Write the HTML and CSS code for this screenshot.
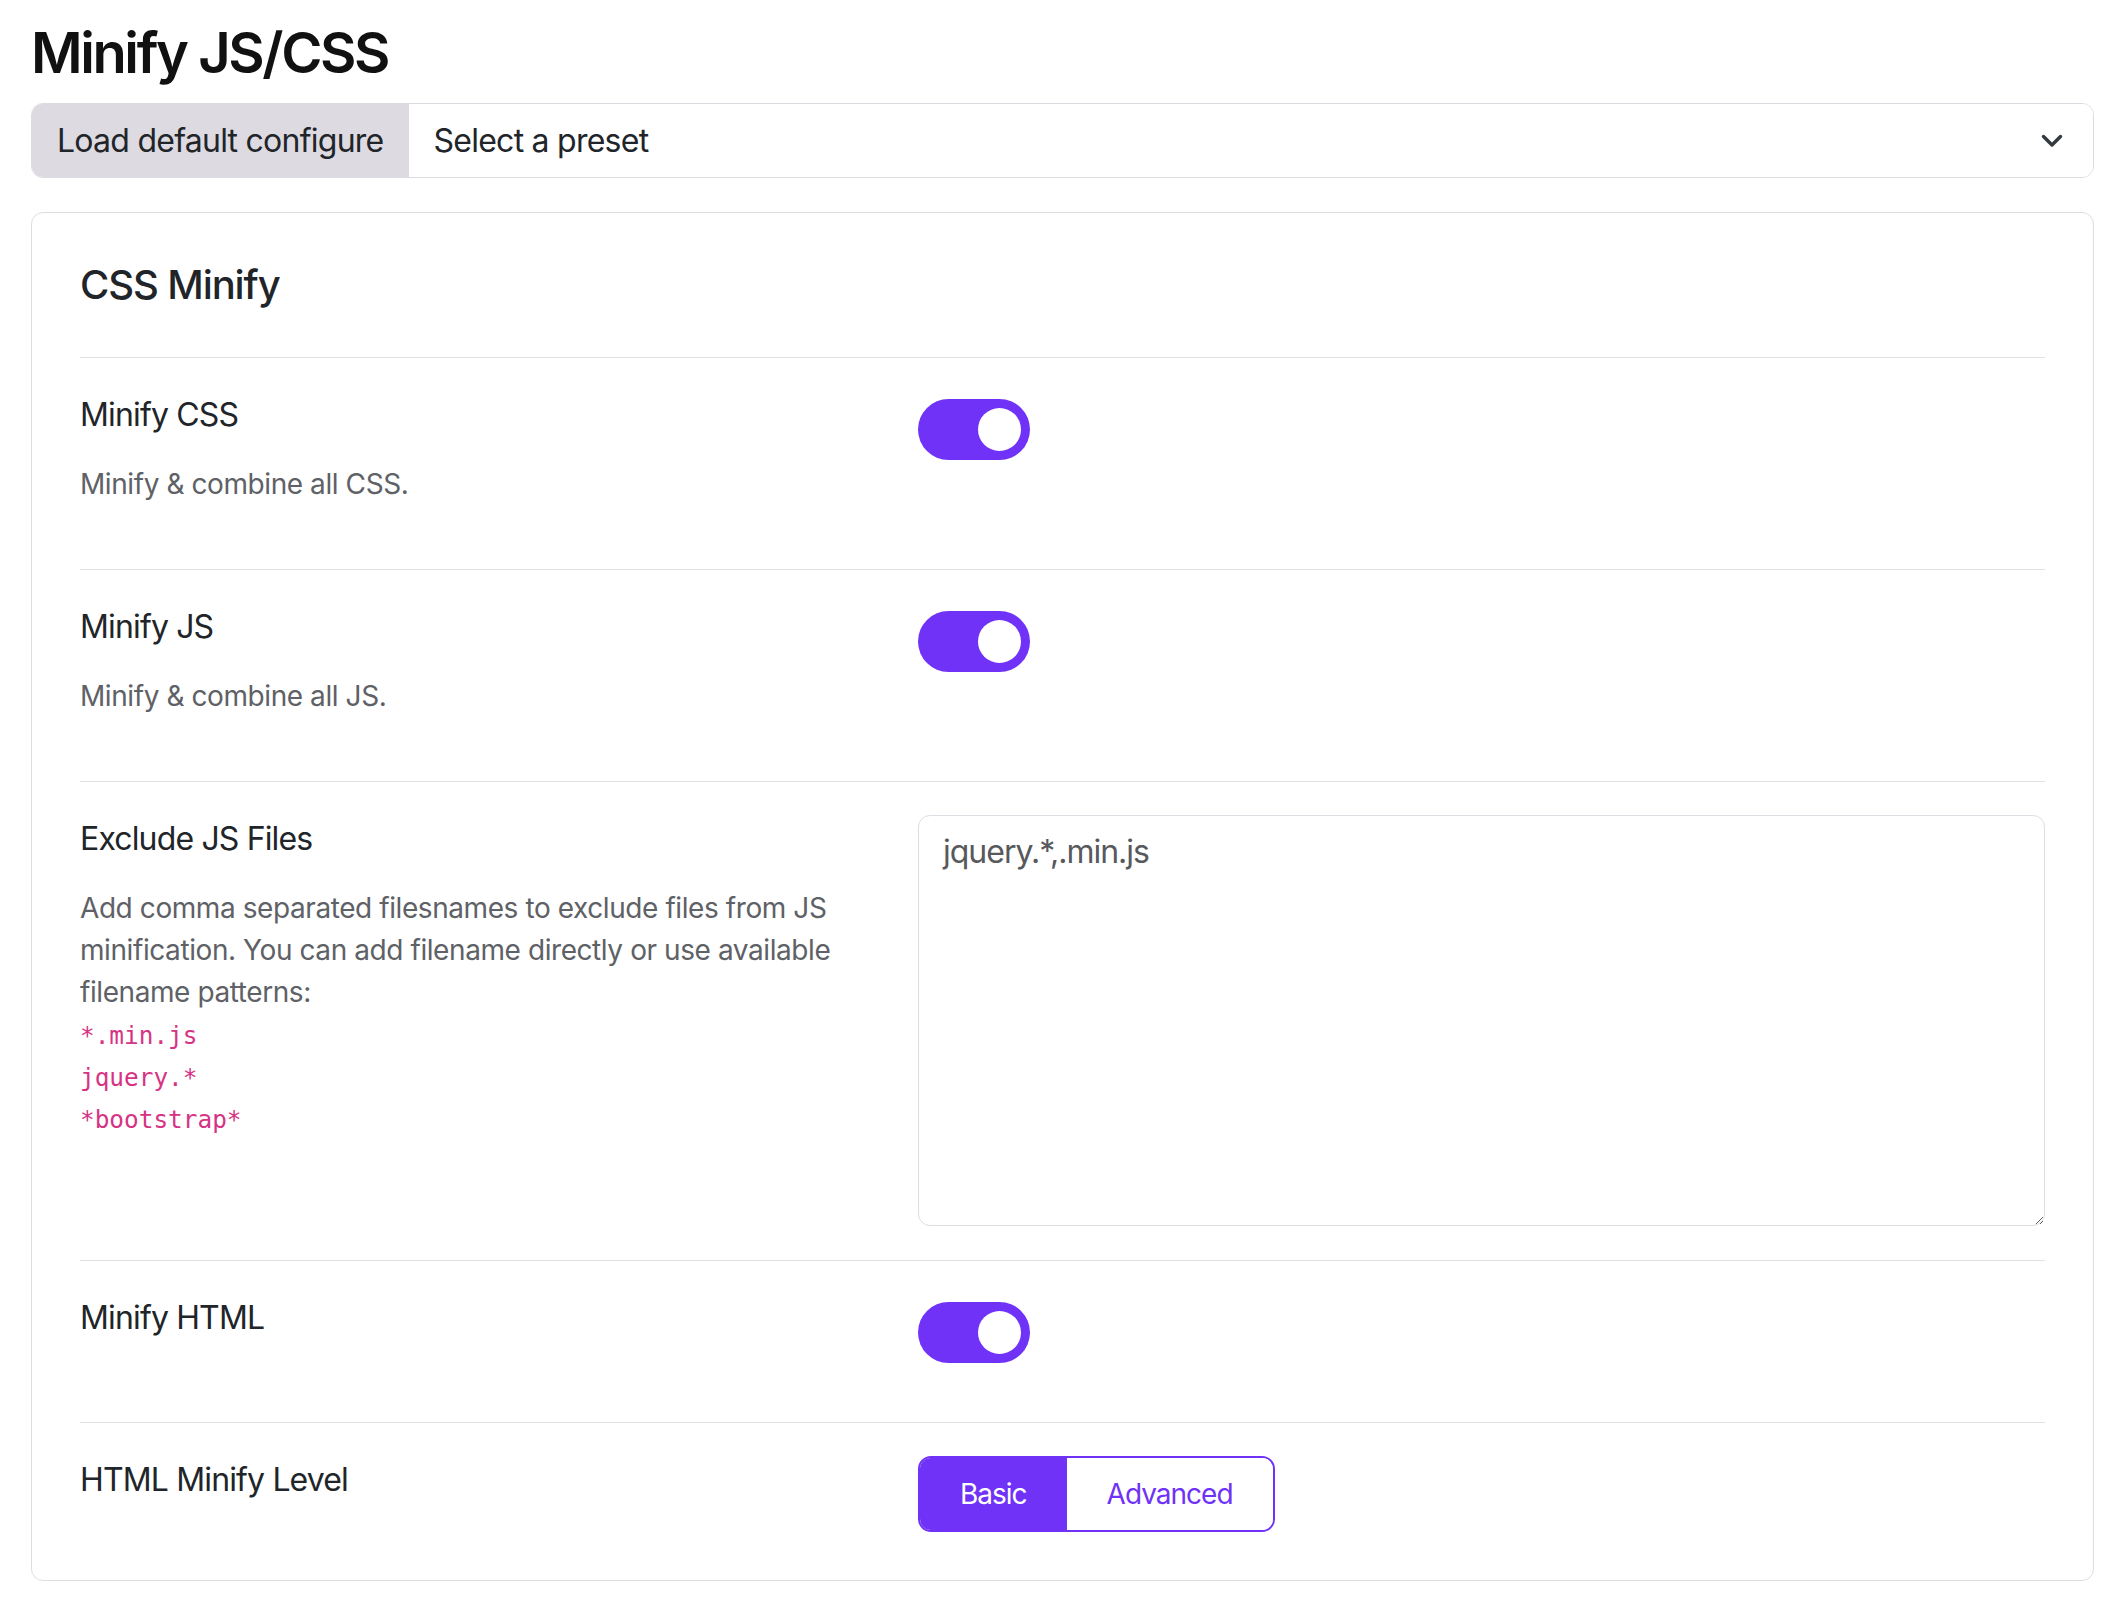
FILE: index.html
```html
<!DOCTYPE html>
<html lang="en">
<head>
<meta charset="utf-8">
<title>Minify JS/CSS</title>
<link rel="stylesheet" href="styles.css">
</head>
<body>
<div class="page">
  <h1 class="page-title">Minify JS/CSS</h1>
  <div class="input-group">
    <div class="ig-button">Load default configure</div>
    <div class="ig-select">
      <span class="ig-select-text">Select a preset</span>
      <svg class="chevron" width="22" height="14" viewBox="0 0 22 14" aria-hidden="true"><path d="M2.5 2.5 L11 11 L19.5 2.5" fill="none" stroke="#343a40" stroke-width="3.4" stroke-linecap="round" stroke-linejoin="round"/></svg>
    </div>
  </div>

  <div class="card">
    <h2 class="card-title">CSS Minify</h2>

    <div class="setting">
      <div class="setting-info">
        <div class="setting-label">Minify CSS</div>
        <p class="setting-desc">Minify &amp; combine all CSS.</p>
      </div>
      <div class="setting-control">
        <div class="switch"><span class="knob"></span></div>
      </div>
    </div>

    <div class="setting">
      <div class="setting-info">
        <div class="setting-label">Minify JS</div>
        <p class="setting-desc">Minify &amp; combine all JS.</p>
      </div>
      <div class="setting-control">
        <div class="switch"><span class="knob"></span></div>
      </div>
    </div>

    <div class="setting">
      <div class="setting-info">
        <div class="setting-label">Exclude JS Files</div>
        <p class="setting-desc">Add comma separated filesnames to exclude files from JS minification. You can add filename directly or use available filename patterns:<br><code>*.min.js</code><br><code>jquery.*</code><br><code>*bootstrap*</code></p>
      </div>
      <div class="setting-control">
        <textarea class="textarea">jquery.*,.min.js</textarea>
      </div>
    </div>

    <div class="setting">
      <div class="setting-info">
        <div class="setting-label">Minify HTML</div>
      </div>
      <div class="setting-control">
        <div class="switch switch-last"><span class="knob"></span></div>
      </div>
    </div>

    <div class="setting setting-last">
      <div class="setting-info">
        <div class="setting-label">HTML Minify Level</div>
      </div>
      <div class="setting-control">
        <div class="btn-group">
          <span class="btn btn-active">Basic</span>
          <span class="btn">Advanced</span>
        </div>
      </div>
    </div>
  </div>
</div>
</body>
</html>
```
FILE: styles.css
```css
* { box-sizing: border-box; }

html, body {
  margin: 0;
  padding: 0;
  background: #ffffff;
}

body {
  font-family: Inter, "Noto Sans", "Liberation Sans", sans-serif;
  color: #212529;
}

.page {
  padding: 20px 30px 0 31px;
}

.page-title {
  margin: 0 0 16px 0;
  font-size: 56px;
  line-height: 67px;
  font-weight: 600;
  letter-spacing: -2.4px;
  color: #111;
}

.input-group {
  display: flex;
  height: 75px;
  border: 1px solid #dcdbe1;
  border-radius: 12px;
  overflow: hidden;
  font-size: 32px;
  line-height: 48px;
  letter-spacing: -0.75px;
}

.ig-button {
  display: flex;
  align-items: center;
  padding: 0 25px;
  background: #dedae2;
  color: #212529;
  white-space: nowrap;
}

.ig-select {
  flex: 1;
  display: flex;
  align-items: center;
  padding: 0 30px 0 25px;
  background: #fff;
}

.ig-select-text { flex: 1; }

.chevron { display: block; }

.card {
  margin-top: 34px;
  border: 1px solid #dedde3;
  border-radius: 12px;
  padding: 48px;
}

.card-title {
  margin: 0;
  padding: 0 0 48px 0;
  font-size: 40px;
  line-height: 48px;
  font-weight: 500;
  letter-spacing: -1.1px;
  color: #212529;
}

.setting {
  display: grid;
  grid-template-columns: 790px 1fr;
  column-gap: 48px;
  align-items: start;
  border-top: 1px solid #e1e0e5;
  padding: 33px 0 32px 0;
}

.setting-last {
  padding-bottom: 0;
}

.setting-label {
  font-size: 32px;
  line-height: 48px;
  margin-bottom: 24px;
  letter-spacing: -0.85px;
  color: #212529;
}

.setting-desc {
  margin: 0 0 32px 0;
  font-size: 28px;
  line-height: 42px;
  letter-spacing: -0.42px;
  color: #5e6166;
}

.setting-desc code {
  font-family: "DejaVu Sans Mono", "Liberation Mono", monospace;
  font-size: 24.4px;
  line-height: 1;
  letter-spacing: 0;
  color: #d63384;
}

.switch {
  display: flex;
  justify-content: flex-end;
  align-items: center;
  width: 112px;
  height: 61px;
  padding: 9px;
  margin-top: 8px;
  border-radius: 31px;
  background: #6f32f6;
}

.switch-last {
  margin-bottom: 27px;
}

.knob {
  display: block;
  width: 43px;
  height: 43px;
  border-radius: 50%;
  background: #fff;
}

.textarea {
  display: block;
  width: 100%;
  height: 411px;
  margin: 0 0 2px 0;
  padding: 12px 24px;
  border: 1px solid #dedde3;
  border-radius: 12px;
  font-family: Inter, "Noto Sans", "Liberation Sans", sans-serif;
  font-size: 32px;
  line-height: 48px;
  letter-spacing: -1px;
  color: #57595c;
  resize: vertical;
  background: #fff;
}

.btn-group {
  display: inline-flex;
  height: 76px;
  border: 2px solid #6f32f6;
  border-radius: 13px;
  overflow: hidden;
}

.btn {
  display: flex;
  align-items: center;
  padding: 0 40px;
  font-size: 28px;
  line-height: 42px;
  letter-spacing: -1px;
  color: #6f32f6;
  background: #fff;
}

.btn-active {
  background: #6f32f6;
  color: #fff;
}
```
